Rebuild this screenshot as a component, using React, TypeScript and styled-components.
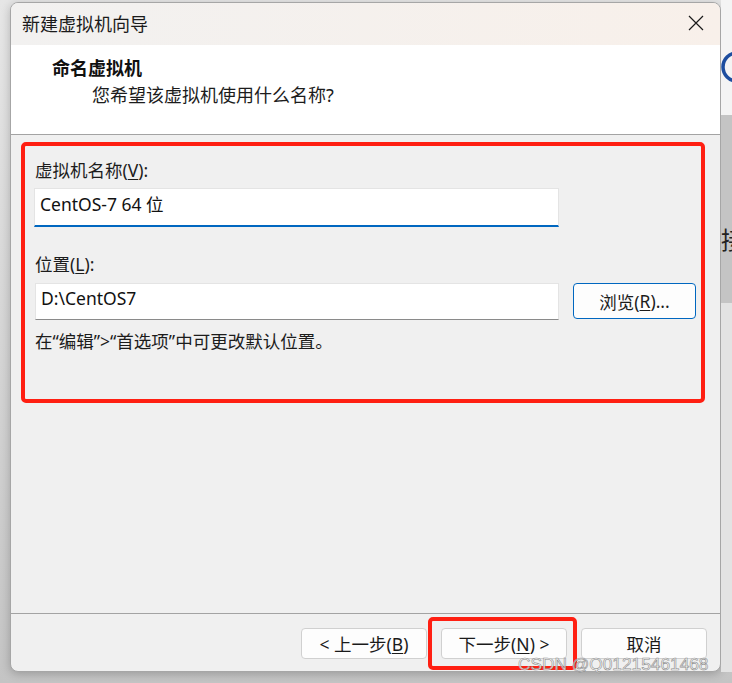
import styled, { createGlobalStyle } from 'styled-components'

const GlobalStyle = createGlobalStyle`
  html, body {
    margin: 0;
    padding: 0;
  }
  body {
    width: 732px;
    height: 683px;
    overflow: hidden;
    background: linear-gradient(to bottom, #e6e6e6, #c4c4c4);
    font-family: 'Noto Sans', 'Noto Sans CJK SC', sans-serif;
    color: #1c1c1c;
  }
`

const Page = styled.div`
  position: relative;
  display: flex;
  align-items: flex-start;
  height: 683px;
  padding-left: 10px;
  box-sizing: border-box;
`

const Window = styled.div`
  flex: none;
  margin-top: 2px;
  width: 711px;
  height: 670px;
  box-sizing: border-box;
  border: 1px solid #a6a6a6;
  border-radius: 8px;
  overflow: hidden;
  display: flex;
  flex-direction: column;
  background: #f0f0f0;
  box-shadow: 0 2px 10px rgba(0, 0, 0, 0.22);
`

const TitleBar = styled.div`
  flex: none;
  height: 42px;
  box-sizing: border-box;
  display: flex;
  align-items: center;
  justify-content: space-between;
  padding: 0 16px 3px 11px;
  background: linear-gradient(to right, #f2f1f0, #f8f0ea);
  font-size: 18px;
  color: #1b1b1b;
`

const CloseIcon = () => (
  <svg width="16" height="16" viewBox="0 0 16 16">
    <path d="M1 1 L15 15 M15 1 L1 15" stroke="#1a1a1a" strokeWidth="1.2" fill="none" />
  </svg>
)

const Header = styled.div`
  flex: none;
  height: 90px;
  box-sizing: border-box;
  background: #fff;
  border-bottom: 1px solid #a3a3a3;
  padding-top: 11px;
`

const Heading = styled.div`
  padding-left: 41px;
  font-size: 18px;
  line-height: 24px;
  font-weight: 700;
  color: #111;
`

const Subtitle = styled.div`
  margin-top: 3px;
  padding-left: 81px;
  font-size: 18px;
  line-height: 24px;
  color: #1c1c1c;
`

const Body = styled.div`
  flex: 1;
  padding: 7px 15px 0 10px;
`

const RedFrame = styled.div`
  height: 261px;
  box-sizing: border-box;
  border: 4px solid #ff1f12;
  border-radius: 5px;
  padding: 12px 0 0 10px;
`

const FieldLabel = styled.div<{ $gap: number }>`
  margin-top: ${(p) => p.$gap}px;
  font-size: 17.5px;
  line-height: 24px;
`

const Key = styled.span`
  text-decoration: underline;
  text-underline-offset: 2px;
  text-decoration-thickness: 1px;
`

const TextBox = styled.div<{ $focused?: boolean }>`
  flex: none;
  width: 524px;
  height: ${(p) => (p.$focused ? 39 : 37)}px;
  box-sizing: border-box;
  background: #fff;
  border: 1px solid #e4e4e4;
  border-bottom: ${(p) => (p.$focused ? '2px solid #0067c0' : '1px solid #8a8a8a')};
  padding: ${(p) => (p.$focused ? '3px' : '2px')} 5px 0;
  font-size: 17.5px;
  line-height: 24px;
  color: #111;
`

const NameBox = styled(TextBox)`
  margin-top: 6px;
  margin-left: -1px;
  width: 525px;
`

const Row = styled.div`
  margin-top: 7px;
  display: flex;
  align-items: flex-start;
  gap: 14px;
`

const BrowseButton = styled.div`
  flex: none;
  width: 123px;
  height: 36px;
  box-sizing: border-box;
  border: 1px solid #0067c0;
  border-radius: 4px;
  background: #fdfdfd;
  display: flex;
  align-items: center;
  justify-content: center;
  font-size: 17.5px;
`

const Hint = styled.div`
  margin-top: 9px;
  font-size: 17.5px;
  line-height: 24px;
`

const Footer = styled.div`
  flex: none;
  height: 58px;
  box-sizing: border-box;
  border-top: 1px solid #a3a3a3;
  display: flex;
  justify-content: flex-end;
  align-items: flex-start;
  gap: 14px;
  padding: 14px 13px 0 0;
`

const Button = styled.div`
  width: 126px;
  height: 31px;
  box-sizing: border-box;
  border: 1px solid #d0d0d0;
  border-radius: 4px;
  background: #fdfdfd;
  display: flex;
  align-items: center;
  justify-content: center;
  font-size: 17.5px;
  color: #1a1a1a;
`

const Marked = styled.div`
  position: relative;
`

const Highlight = styled.div`
  position: absolute;
  top: -11px;
  left: -13px;
  right: -10px;
  bottom: -11px;
  border: 4px solid #ff1f12;
  border-radius: 5px;
`

const Watermark = styled.div`
  position: absolute;
  left: 518px;
  top: 656px;
  font-family: 'Liberation Sans', Arial, sans-serif;
  font-size: 17.3px;
  line-height: 1;
  color: rgba(255, 255, 255, 0.8);
  -webkit-text-stroke: 0.6px #8c8c8c;
  white-space: nowrap;
`

const Strip = styled.div`
  flex: none;
  width: 11px;
  height: 672px;
  display: flex;
  flex-direction: column;
  overflow: hidden;
`

const StripBlock = styled.div<{ $h: number; $bg: string }>`
  flex: none;
  height: ${(p) => p.$h}px;
  background: ${(p) => p.$bg};
  overflow: hidden;
`

const StripText = styled.div`
  margin-top: 112px;
  font-size: 24px;
  line-height: 26px;
  color: #222;
  white-space: nowrap;
`

export default function App() {
  return (
    <>
      <GlobalStyle />
      <Page>
        <Window>
          <TitleBar>
            <span>新建虚拟机向导</span>
            <CloseIcon />
          </TitleBar>
          <Header>
            <Heading>命名虚拟机</Heading>
            <Subtitle>您希望该虚拟机使用什么名称?</Subtitle>
          </Header>
          <Body>
            <RedFrame>
              <FieldLabel $gap={0}>
                虚拟机名称(<Key>V</Key>):
              </FieldLabel>
              <NameBox $focused>CentOS-7 64 位</NameBox>
              <FieldLabel $gap={25}>
                位置(<Key>L</Key>):
              </FieldLabel>
              <Row>
                <TextBox>D:\CentOS7</TextBox>
                <BrowseButton>
                  浏览(<Key>R</Key>)...
                </BrowseButton>
              </Row>
              <Hint>在“编辑”&gt;“首选项”中可更改默认位置。</Hint>
            </RedFrame>
          </Body>
          <Footer>
            <Button>
              &lt; 上一步(<Key>B</Key>)
            </Button>
            <Marked>
              <Button>
                下一步(<Key>N</Key>) &gt;
              </Button>
              <Highlight />
            </Marked>
            <Button>取消</Button>
          </Footer>
        </Window>
        <Strip>
          <StripBlock $h={115} $bg="#f4f4f4">
            <svg width="11" height="115" viewBox="0 0 11 115">
              <circle cx="16" cy="67" r="14" stroke="#1d4d9f" strokeWidth="3.5" fill="none" />
            </svg>
          </StripBlock>
          <StripBlock $h={188} $bg="#c4c4c4">
            <StripText>接</StripText>
          </StripBlock>
          <StripBlock $h={369} $bg="#e3e3e3" />
        </Strip>
        <Watermark>CSDN @Q01215461468</Watermark>
      </Page>
    </>
  )
}
